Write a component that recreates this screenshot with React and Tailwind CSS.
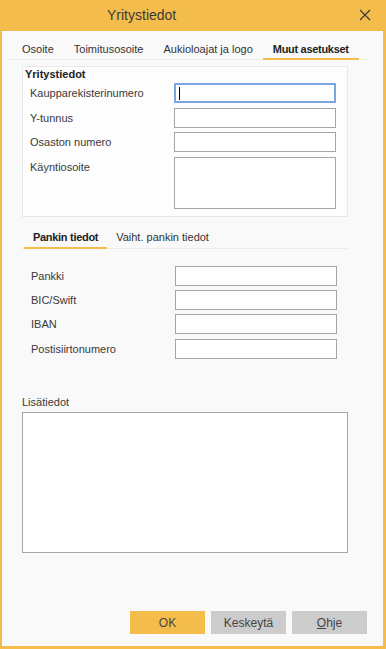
import React from 'react';

// Form field rows for the two sections
const companyFields = ['Kaupparekisterinumero', 'Y-tunnus', 'Osaston numero'];
const bankFields = [
  { label: 'Pankki', mt: 'mt-0' },
  { label: 'BIC/Swift', mt: 'mt-[4px]' },
  { label: 'IBAN', mt: 'mt-[4px]' },
  { label: 'Postisiirtonumero', mt: 'mt-[5px]' },
];

function TextField({ focused }) {
  return (
    <div className="relative">
      <input
        type="text"
        className={
          focused
            ? 'block w-[162px] h-[20px] bg-white border-2 border-[#7aa6e3] outline-none'
            : 'block w-[162px] h-[20px] bg-white border border-[#a6a6a6] outline-none'
        }
      />
      {focused && <div className="absolute left-[5px] top-[4px] w-px h-[13px] bg-black" />}
    </div>
  );
}

export default function App() {
  return (
    <div className="w-[386px] h-[649px] flex flex-col bg-[#f4bd4b] font-['Liberation_Sans',Arial,sans-serif] text-[11px] text-[#333]">
      {/* Title bar */}
      <div className="h-[31px] flex items-center relative shrink-0">
        <span className="ml-[107px] text-[14px] text-[#3a3a3a]">Yritystiedot</span>
        <svg className="absolute left-[359px] top-[9px]" width="12" height="12" viewBox="0 0 12 12">
          <path d="M1 1L11 11M11 1L1 11" stroke="#3a3a3a" strokeWidth="1.2" fill="none" />
        </svg>
      </div>

      <div className="flex-1 flex flex-col bg-[#f9f9f9] ml-[2px] mr-[3px] mb-[3px]">
        {/* Main tabs */}
        <div className="ml-[7px] w-[357px] mt-[7px] h-[22px] flex pl-[3px] border-b border-[#ebebeb]">
          <div className="h-full flex items-center px-[10px] pt-[2px]">Osoite</div>
          <div className="h-full flex items-center px-[10px] pt-[2px]">Toimitusosoite</div>
          <div className="h-full flex items-center px-[10px] pt-[2px]">Aukioloajat ja logo</div>
          <div className="h-[22px] -mb-px flex items-center px-[10px] pt-[2px] font-bold tracking-[-0.3px] text-[#222] border-b-2 border-[#f4bd4b] rounded-b-[1px]">
            Muut asetukset
          </div>
        </div>

        {/* Company info group */}
        <div className="mt-[6px] ml-[20px] w-[326px] h-[151px] border border-[#e8e8e8] bg-[#fdfdfd]">
          <div className="pl-[2px] leading-[14px] font-bold text-[#222]">Yritystiedot</div>
          <div className="pl-[7px] mt-[2px] flex flex-col">
            {companyFields.map((label, i) => (
              <div key={label} className={`flex items-center ${i === 1 ? 'mt-[5px]' : i === 2 ? 'mt-[4px]' : ''}`}>
                <span className="w-[144px] text-[#3a3a3a]">{label}</span>
                <TextField focused={i === 0} />
              </div>
            ))}
            <div className="flex items-start mt-[5px]">
              <span className="w-[144px] pt-[2px] text-[#3a3a3a]">Käyntiosoite</span>
              <textarea className="block w-[162px] h-[52px] bg-white border border-[#a6a6a6] resize-none outline-none" />
            </div>
          </div>
        </div>

        {/* Bank tabs */}
        <div className="mt-[10px] ml-[20px] w-[326px] h-[22px] flex pl-[2px] border-b border-[#ebebeb]">
          <div className="h-[22px] -mb-px flex items-center px-[9px] font-bold tracking-[-0.3px] text-[#222] border-b-2 border-[#f4bd4b]">
            Pankin tiedot
          </div>
          <div className="h-full flex items-center px-[9px]">Vaiht. pankin tiedot</div>
        </div>

        <div className="mt-[17px] ml-[29px] flex flex-col">
          {bankFields.map((f) => (
            <div key={f.label} className={`flex items-center ${f.mt}`}>
              <span className="w-[144px] text-[#3a3a3a]">{f.label}</span>
              <TextField />
            </div>
          ))}
        </div>

        {/* Extra info */}
        <div className="mt-[36px] ml-[20px] leading-[14px] text-[#3a3a3a]">Lisätiedot</div>
        <textarea className="block mt-[3px] ml-[20px] w-[326px] h-[141px] bg-white border border-[#a6a6a6] resize-none outline-none" />

        {/* Buttons */}
        <div className="mt-auto flex justify-end gap-[6px] pr-[16px] pb-[12px]">
          <button className="w-[75px] h-[23px] bg-[#f4bd4b] text-[12px] text-[#444]">OK</button>
          <button className="w-[75px] h-[23px] bg-[#cccccc] text-[12px] text-[#444]">Keskeytä</button>
          <button className="w-[75px] h-[23px] bg-[#cccccc] text-[12px] text-[#444]">
            <span className="underline">O</span>hje
          </button>
        </div>
      </div>
    </div>
  );
}
